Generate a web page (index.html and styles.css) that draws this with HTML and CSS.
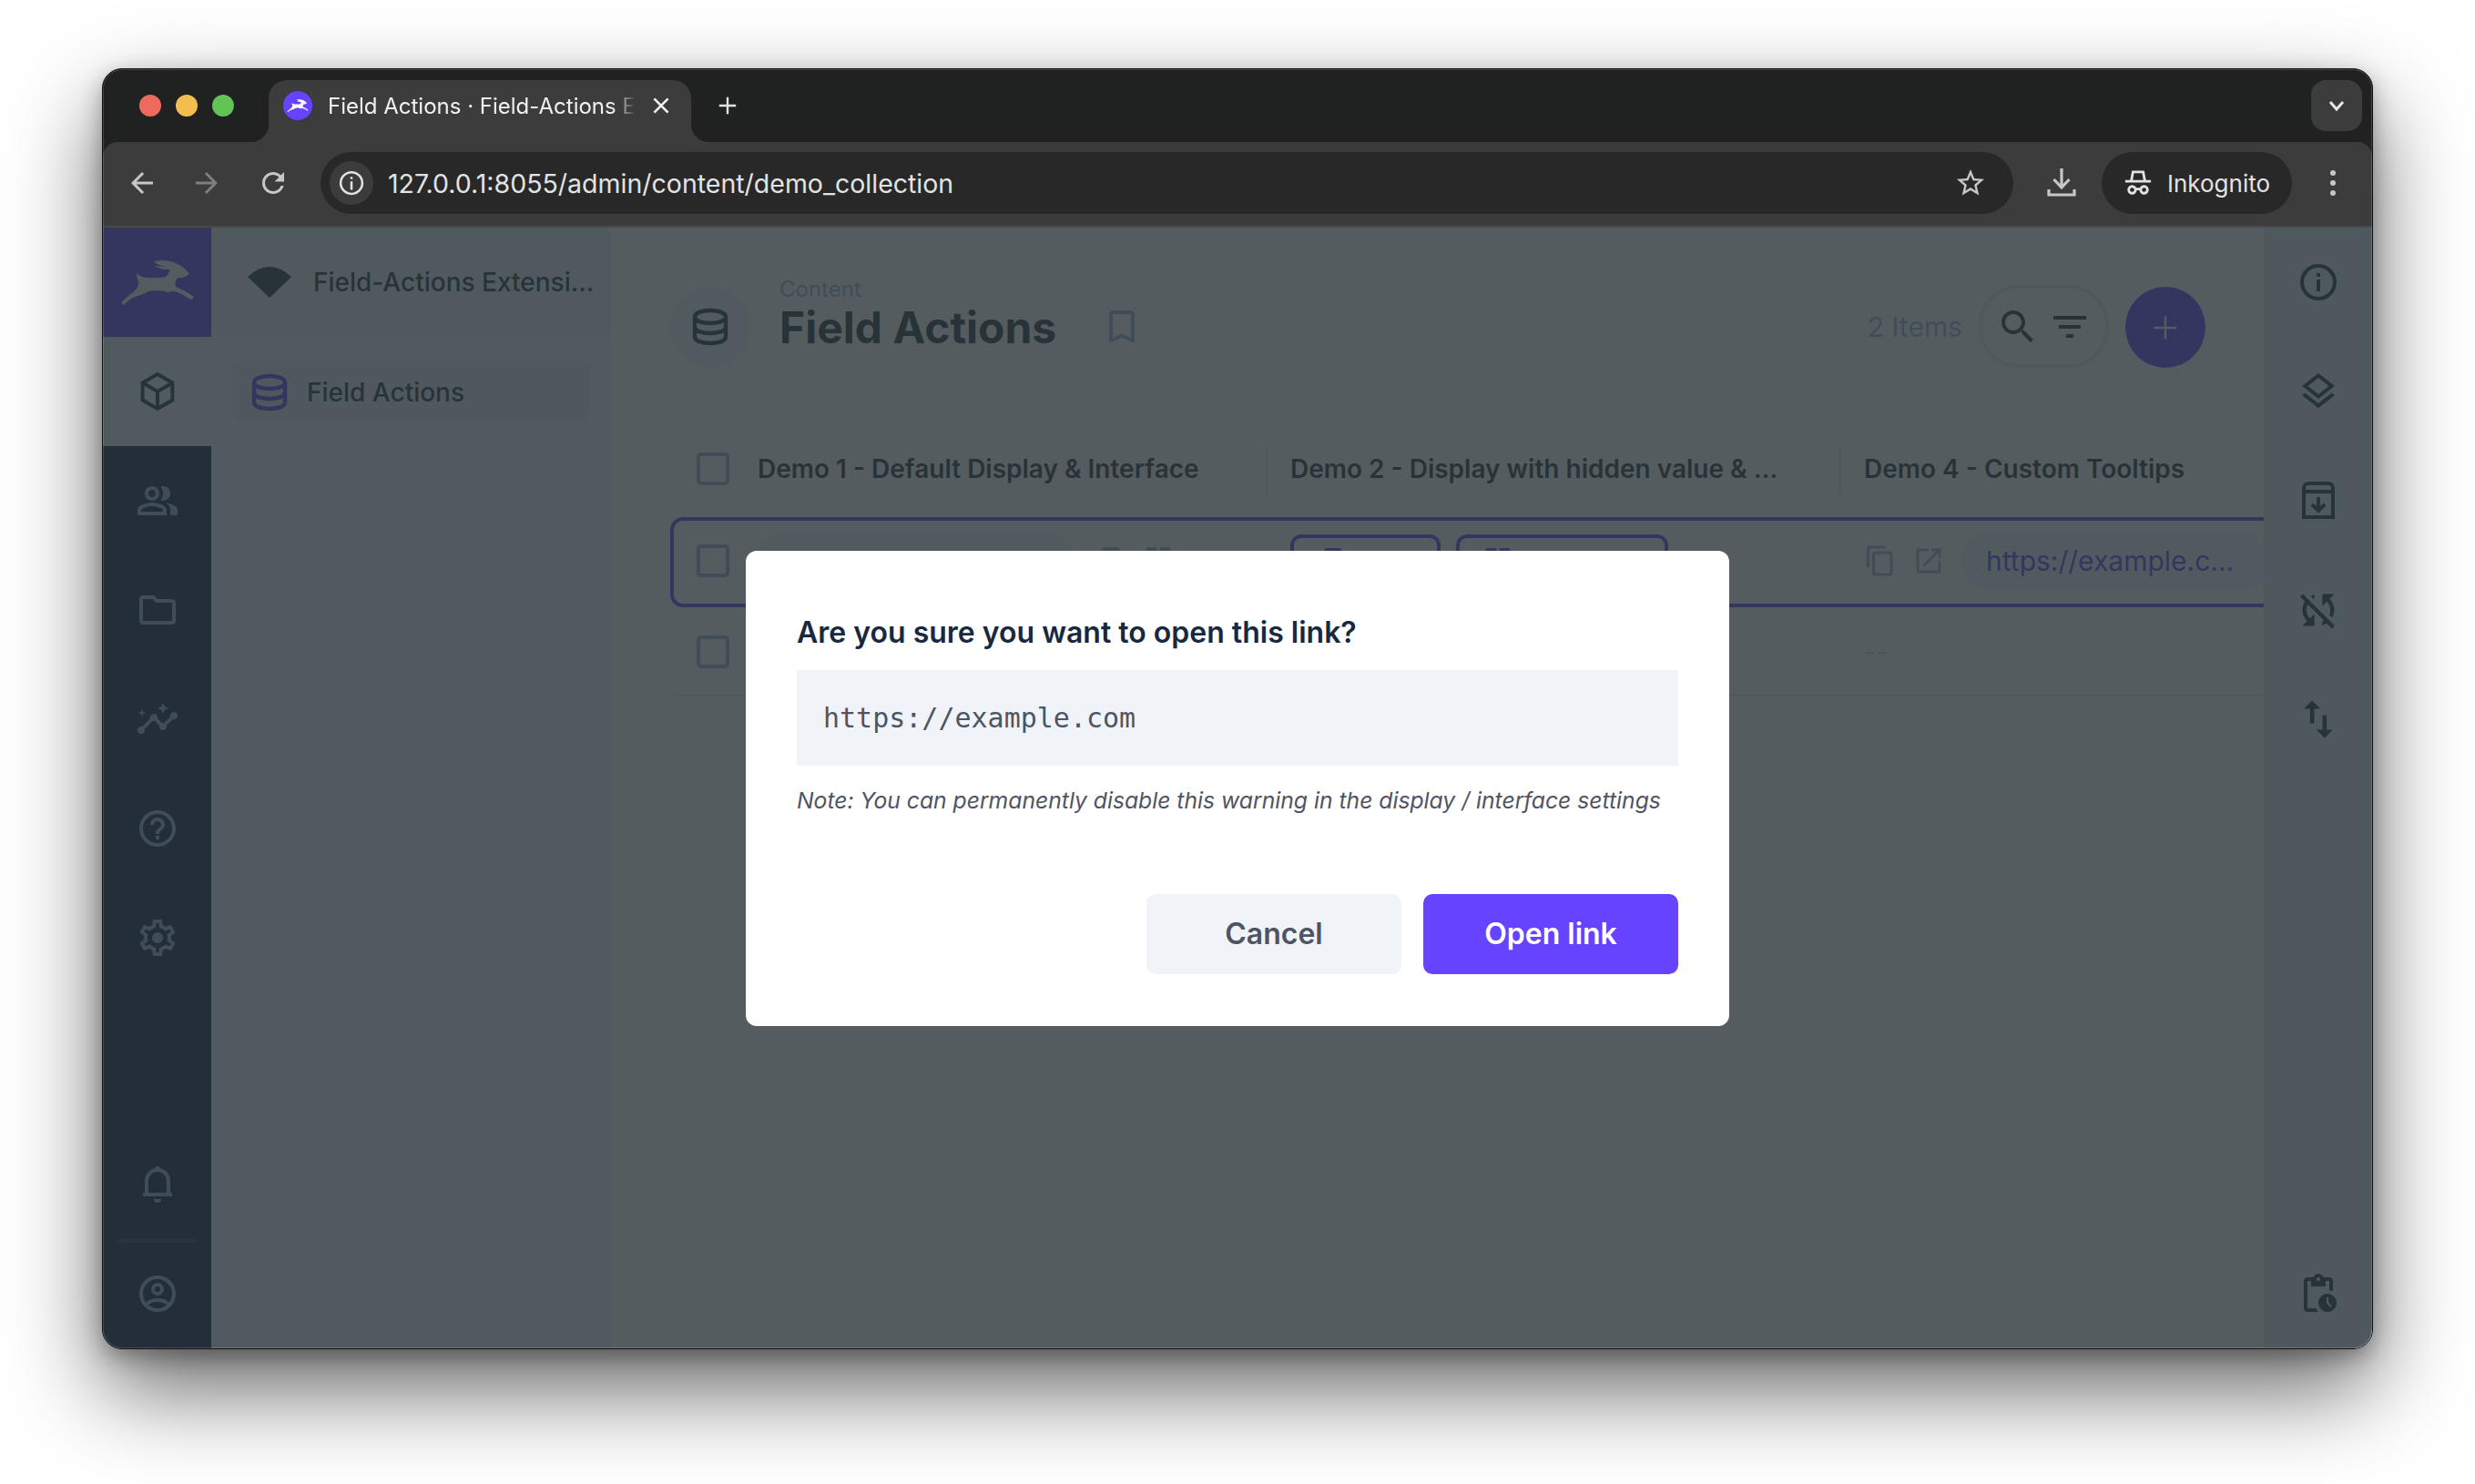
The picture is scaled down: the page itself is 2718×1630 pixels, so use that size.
FILE: index.html
```html
<!DOCTYPE html>
<html>
<head>
    <meta charset="utf-8">
    <title>Field Actions</title>
    <link rel="stylesheet" href="styles.css">
</head>
<body>
    <svg class="defs" width="0" height="0">
        <symbol id="rabbit" viewBox="60 160 250 160">
            <path d="M68 306C80 292 92 282 106 272C116 264 122 254 124 240C118 230 116 220 119 210C126 220 136 224 150 225C170 226 192 226 208 224C216 220 222 210 226 198C208 200 190 196 172 186C184 186 200 190 214 190C196 186 180 180 174 172C196 166 226 168 246 178C264 186 280 198 288 212C282 222 268 226 250 226C244 236 240 246 246 256C262 262 282 272 302 286C304 292 298 298 292 296C276 284 256 272 232 268C224 274 216 274 210 270C190 266 172 266 156 270C136 282 120 284 106 290C94 296 84 306 76 312C70 312 66 310 68 306Z"/>
        </symbol>
        <symbol id="database" viewBox="0 0 24 24">
            <path fill="none" stroke="currentColor" stroke-width="2.2" d="M3.500 6.500C3.500 4.300 7.300 3 12 3s8.500 1.300 8.500 3.500v11c0 2.200-3.800 3.500-8.500 3.500s-8.500-1.300-8.500-3.500zM3.500 6.500c0 2.200 3.800 3.500 8.500 3.500s8.500-1.300 8.500-3.500M3.500 12c0 2.200 3.800 3.500 8.500 3.500s8.500-1.300 8.500-3.500"/>
        </symbol>
        <symbol id="copy" viewBox="0 0 24 24">
            <path d="M16 1H4c-1.100 0-2 .9-2 2v14h2V3h12V1zm3 4H8c-1.100 0-2 .9-2 2v14c0 1.100.9 2 2 2h11c1.100 0 2-.9 2-2V7c0-1.100-.9-2-2-2zm0 16H8V7h11v14z"/>
        </symbol>
        <symbol id="open" viewBox="0 0 24 24">
            <path d="M19 19H5V5h7V3H5c-1.110 0-2 .9-2 2v14c0 1.100.89 2 2 2h14c1.100 0 2-.9 2-2v-7h-2v7zM14 3v2h3.590l-9.830 9.830 1.410 1.410L19 6.410V10h2V3h-7z"/>
        </symbol>
        <symbol id="block" viewBox="0 0 24 24">
            <rect x="6" y="2" width="13" height="20" rx="2.500"/>
        </symbol>
        <symbol id="blocks" viewBox="0 0 24 24">
            <rect x="3" y="2" width="8" height="20" rx="1.500"/>
            <rect x="13" y="2" width="8" height="20" rx="1.500"/>
        </symbol>
    </svg>

    <div class="window">
        <div class="titlebar">
            <div class="lights">
                <span class="light red"></span>
                <span class="light yellow"></span>
                <span class="light green"></span>
            </div>
            <div class="tab">
                <span class="favicon"><svg class="favicon-rabbit"><use href="#rabbit"/></svg></span>
                <span class="tab-title">Field Actions · Field-Actions E</span>
                <svg class="tab-close" viewBox="0 0 24 24"><path d="M5 5l14 14M19 5L5 19"/></svg>
            </div>
            <svg class="new-tab" viewBox="0 0 24 24"><path d="M12 2v20M2 12h20"/></svg>
            <div class="tab-list">
                <svg class="tab-list-icon" viewBox="0 0 24 24"><path d="M5 8l7 8 7-8"/></svg>
            </div>
        </div>

        <div class="toolbar">
            <svg class="tool" viewBox="0 0 24 24"><path d="M20 11H7.830l5.590-5.590L12 4l-8 8 8 8 1.410-1.410L7.830 13H20v-2z"/></svg>
            <svg class="tool tool-off" viewBox="0 0 24 24"><path d="M12 4l-1.410 1.410L16.170 11H4v2h12.170l-5.580 5.590L12 20l8-8z"/></svg>
            <svg class="tool" viewBox="0 0 24 24"><path d="M17.650 6.350C16.200 4.900 14.210 4 12 4c-4.420 0-7.990 3.580-7.990 8s3.570 8 7.990 8c3.730 0 6.840-2.550 7.730-6h-2.080c-.82 2.330-3.040 4-5.650 4-3.310 0-6-2.690-6-6s2.690-6 6-6c1.660 0 3.140.69 4.220 1.780L13 11h7V4l-2.350 2.350z"/></svg>
            <div class="address">
                <span class="site-info">
                    <svg class="site-info-icon" viewBox="0 0 24 24">
                        <circle cx="12" cy="12" r="9.500" fill="none" stroke="currentColor" stroke-width="2"/>
                        <path d="M11 10.500h2V18h-2zM11 6.500h2v2h-2z"/>
                    </svg>
                </span>
                <span class="url">127.0.0.1:8055/admin/content/demo_collection</span>
                <svg class="tool star" viewBox="0 0 24 24"><path d="M22 9.240l-7.190-.62L12 2 9.190 8.630 2 9.240l5.460 4.730L5.820 21 12 17.270 18.180 21l-1.630-7.030L22 9.240zM12 15.400l-3.760 2.270 1-4.280-3.320-2.880 4.380-.38L12 6.100l1.710 4.040 4.380.38-3.320 2.880 1 4.280L12 15.400z"/></svg>
            </div>
            <svg class="download" viewBox="0 0 32 32"><path d="M16 0v20M7.500 12l8.500 9 8.500-9M2 23v6h28v-6"/></svg>
            <div class="incognito">
                <svg class="incognito-icon" viewBox="0 0 32 32">
                    <path d="M8 14l2-11h12l2 11M1 14h30"/>
                    <circle cx="9" cy="24" r="4"/>
                    <circle cx="23" cy="24" r="4"/>
                    <path d="M13 23h6"/>
                </svg>
                <span>Inkognito</span>
            </div>
            <svg class="tool dots" viewBox="0 0 36 36">
                <circle cx="18" cy="7" r="3"/>
                <circle cx="18" cy="18" r="3"/>
                <circle cx="18" cy="29" r="3"/>
            </svg>
        </div>

        <div class="app">
            <nav class="nav">
                <div class="logo"><svg class="logo-rabbit"><use href="#rabbit"/></svg></div>
                <div class="nav-item active">
                    <svg class="icon" viewBox="0 0 24 24"><path class="line" d="M12 2.500l8.200 4.750v9.500L12 21.500l-8.200-4.750v-9.500zM3.800 7.250L12 12l8.200-4.750M12 12v9.500"/></svg>
                </div>
                <div class="nav-item">
                    <svg class="icon" viewBox="0 0 24 24"><path d="M16.670 13.130C18.040 14.060 19 15.320 19 17v3h4v-3c0-2.180-3.570-3.470-6.330-3.870zM15 12c2.210 0 4-1.790 4-4s-1.790-4-4-4c-.47 0-.91.1-1.330.24C14.500 5.270 15 6.580 15 8s-.5 2.730-1.330 3.760c.42.14.86.24 1.330.24zM9 12c2.210 0 4-1.790 4-4s-1.790-4-4-4-4 1.790-4 4 1.790 4 4 4zm0-6c1.100 0 2 .9 2 2s-.9 2-2 2-2-.9-2-2 .9-2 2-2zM9 13c-2.670 0-8 1.340-8 4v3h16v-3c0-2.660-5.330-4-8-4zm6 5H3v-.99C3.200 16.290 6.300 15 9 15s5.800 1.290 6 2v1z"/></svg>
                </div>
                <div class="nav-item">
                    <svg class="icon" viewBox="0 0 24 24"><path d="M9.170 6l2 2H20v10H4V6h5.170M10 4H4c-1.100 0-1.990.9-1.990 2L2 18c0 1.100.9 2 2 2h16c1.100 0 2-.9 2-2V8c0-1.100-.9-2-2-2h-8l-2-2z"/></svg>
                </div>
                <div class="nav-item">
                    <svg class="icon" viewBox="0 0 24 24"><path d="M21 8c-1.450 0-2.260 1.440-1.930 2.510l-3.550 3.560c-.3-.09-.74-.09-1.040 0l-2.550-2.550C12.270 10.450 11.460 9 10 9c-1.450 0-2.270 1.440-1.930 2.520l-4.560 4.550C2.440 15.740 1 16.550 1 18c0 1.100.9 2 2 2 1.450 0 2.260-1.440 1.930-2.510l4.550-4.560c.3.09.74.09 1.040 0l2.550 2.550C12.730 16.550 13.540 18 15 18c1.450 0 2.270-1.440 1.930-2.520l3.560-3.550c1.070.33 2.510-.48 2.510-1.930 0-1.100-.9-2-2-2zM15 9l.94-2.070L18 6l-2.060-.93L15 3l-.92 2.070L12 6l2.080.93zM3.500 11L4 9l2-.5L4 8l-.5-2L3 8l-2 .5L3 9z"/></svg>
                </div>
                <div class="nav-item">
                    <svg class="icon" viewBox="0 0 24 24"><path d="M11 18h2v-2h-2v2zm1-16C6.480 2 2 6.480 2 12s4.480 10 10 10 10-4.480 10-10S17.520 2 12 2zm0 18c-4.410 0-8-3.590-8-8s3.590-8 8-8 8 3.590 8 8-3.590 8-8 8zm0-14c-2.210 0-4 1.790-4 4h2c0-1.100.9-2 2-2s2 .9 2 2c0 2-3 1.750-3 5h2c0-2.250 3-2.500 3-5 0-2.210-1.790-4-4-4z"/></svg>
                </div>
                <div class="nav-item">
                    <svg class="icon" viewBox="0 0 24 24"><path d="M19.430 12.980c.04-.32.07-.64.07-.98 0-.34-.03-.66-.07-.98l2.110-1.650c.19-.15.24-.42.12-.64l-2-3.460c-.09-.16-.26-.25-.44-.25-.06 0-.12.01-.17.03l-2.490 1c-.52-.4-1.080-.73-1.690-.98l-.38-2.650C14.460 2.180 14.250 2 14 2h-4c-.25 0-.46.18-.49.42l-.38 2.650c-.61.25-1.170.59-1.690.98l-2.490-1c-.06-.02-.12-.03-.18-.03-.17 0-.34.09-.43.25l-2 3.460c-.13.22-.07.49.12.64l2.110 1.650c-.04.32-.07.65-.07.98 0 .33.03.66.07.98l-2.110 1.650c-.19.15-.24.42-.12.64l2 3.460c.09.16.26.25.44.25.06 0 .12-.01.17-.03l2.490-1c.52.4 1.080.73 1.690.98l.38 2.650c.03.24.24.42.49.42h4c.25 0 .46-.18.49-.42l.38-2.650c.61-.25 1.170-.59 1.690-.98l2.490 1c.06.02.12.03.18.03.17 0 .34-.09.43-.25l2-3.460c.12-.22.07-.49-.12-.64l-2.110-1.650zm-1.980-1.710c.04.31.05.52.05.73 0 .21-.02.43-.05.73l-.14 1.130.89.7 1.080.84-.7 1.210-1.270-.51-1.040-.42-.9.68c-.43.32-.84.56-1.250.73l-1.060.43-.16 1.130-.2 1.350h-1.400l-.19-1.350-.16-1.130-1.060-.43c-.43-.18-.83-.41-1.230-.71l-.91-.7-1.060.43-1.270.51-.7-1.210 1.080-.84.89-.7-.14-1.130c-.03-.31-.05-.54-.05-.74s.02-.43.05-.73l.14-1.130-.89-.7-1.080-.84.7-1.210 1.270.51 1.040.42.9-.68c.43-.32.84-.56 1.250-.73l1.060-.43.16-1.130.2-1.350h1.390l.19 1.350.16 1.130 1.060.43c.43.18.83.41 1.230.71l.91.7 1.060-.43 1.270-.51.7 1.210-1.070.85-.89.7.14 1.130z"/><circle cx="12" cy="12" r="3"/></svg>
                </div>
                <div class="nav-item nav-bell">
                    <svg class="icon" viewBox="0 0 24 24"><path class="line" d="M6 17.500V10a6 6 0 0 1 12 0v7.500M4 17.500h16"/><circle cx="12" cy="3.500" r="1.500"/><path d="M10 20h4a2 2 0 0 1-4 0z"/></svg>
                </div>
                <div class="nav-item nav-user">
                    <svg class="icon" viewBox="0 0 24 24"><circle class="line" cx="12" cy="12" r="9"/><circle class="line" cx="12" cy="9.500" r="2.500"/><path class="line" d="M5.500 18.500C8 14.500 16 14.500 18.500 18.500"/></svg>
                </div>
            </nav>

            <aside class="side">
                <div class="project">
                    <svg class="project-icon" viewBox="0 0 48 34"><path d="M0 11Q24-11 48 11L24 34Z"/></svg>
                    <span class="project-name">Field-Actions Extensi...</span>
                </div>
                <div class="collection">
                    <svg class="collection-icon"><use href="#database"/></svg>
                    <span>Field Actions</span>
                </div>
            </aside>

            <main class="main">
                <header class="header">
                    <div class="header-icon"><svg class="header-db"><use href="#database"/></svg></div>
                    <div class="header-titles">
                        <div class="crumb">Content</div>
                        <h1 class="title">Field Actions</h1>
                    </div>
                    <svg class="icon bookmark" viewBox="0 0 24 24"><path d="M17 3H7c-1.100 0-1.990.9-1.990 2L5 21l7-3 7 3V5c0-1.100-.9-2-2-2zm0 15l-5-2.180L7 18V5h10v13z"/></svg>
                    <span class="count">2 Items</span>
                    <div class="search">
                        <svg class="icon" viewBox="0 0 24 24"><path d="M15.500 14h-.79l-.28-.27C15.410 12.590 16 11.110 16 9.500 16 5.910 13.090 3 9.500 3S3 5.910 3 9.500 5.910 16 9.500 16c1.610 0 3.090-.59 4.230-1.570l.27.28v.79l5 4.990L20.490 19l-4.990-5zm-6 0C7.010 14 5 11.990 5 9.500S7.010 5 9.500 5 14 7.010 14 9.500 11.990 14 9.500 14z"/></svg>
                        <svg class="icon" viewBox="0 0 24 24"><path d="M10 18h4v-2h-4v2zM3 6v2h18V6H3zm3 7h12v-2H6v2z"/></svg>
                    </div>
                    <div class="add"><svg class="add-icon" viewBox="0 0 24 24"><path d="M12 2v20M2 12h20"/></svg></div>
                </header>

                <div class="table">
                    <div class="row row-head">
                        <span class="check"></span>
                        <span class="th">Demo 1 - Default Display &amp; Interface</span>
                        <span class="th th-sep">Demo 2 - Display with hidden value &amp; ...</span>
                        <span class="th th-sep">Demo 4 - Custom Tooltips</span>
                    </div>
                    <div class="row row-active">
                        <span class="check"></span>
                        <div class="cell">
                            <span class="value value-first"></span>
                            <svg class="action"><use href="#block"/></svg>
                            <svg class="action"><use href="#blocks"/></svg>
                        </div>
                        <div class="cell">
                            <span class="outline outline-a"><svg class="action action-purple"><use href="#block"/></svg></span>
                            <span class="outline outline-b"><svg class="action action-purple"><use href="#blocks"/></svg></span>
                        </div>
                        <div class="cell">
                            <svg class="action"><use href="#copy"/></svg>
                            <svg class="action"><use href="#open"/></svg>
                            <span class="value link">https://example.c...</span>
                        </div>
                    </div>
                    <div class="row row-last">
                        <span class="check"></span>
                        <span></span>
                        <span></span>
                        <span class="empty">--</span>
                    </div>
                </div>
            </main>

            <aside class="rail">
                <div class="rail-item">
                    <svg class="icon rail-icon" viewBox="0 0 24 24"><circle class="line" cx="12" cy="12" r="9"/><path d="M11 10.500h2V17h-2zM11 7h2v2h-2z"/></svg>
                </div>
                <div class="rail-item">
                    <svg class="icon rail-icon" viewBox="0 0 24 24"><path d="M11.990 18.540l-7.370-5.730L3 14.070l9 7 9-7-1.630-1.270-7.380 5.740zM12 16l7.360-5.730L21 9l-9-7-9 7 1.630 1.270L12 16zm0-11.470L17.740 9 12 13.470 6.260 9 12 4.530z"/></svg>
                </div>
                <div class="rail-item">
                    <svg class="icon rail-icon" viewBox="0 0 24 24"><path class="line" d="M4 7V5a2.500 2.500 0 0 1 2.500-2.500h11A2.500 2.500 0 0 1 20 5v16H4V7h16M12 10v7.500M8.500 14l3.500 3.500 3.500-3.500"/></svg>
                </div>
                <div class="rail-item">
                    <svg class="icon rail-icon" viewBox="1 1 22 22"><path d="M10 6.350V4.260c-.66.17-1.290.43-1.880.75l1.500 1.500c.13-.06.25-.11.38-.16zM20 12c0-2.210-.91-4.200-2.360-5.640L20 4h-6v6l2.240-2.240C17.320 8.850 18 10.340 18 12c0 .85-.19 1.650-.51 2.380l1.500 1.500C19.630 14.740 20 13.410 20 12zM4.270 4L2.860 5.410l2.360 2.360C4.450 8.990 4 10.440 4 12c0 2.210.91 4.200 2.360 5.640L4 20h6v-6l-2.240 2.240C6.680 15.150 6 13.660 6 12c0-1 .25-1.940.68-2.770l8.080 8.080c-.25.13-.5.24-.76.34v2.090c.8-.21 1.550-.54 2.230-.96l2.580 2.580 1.410-1.410L4.270 4z"/></svg>
                </div>
                <div class="rail-item">
                    <svg class="icon rail-icon" viewBox="1.500 1.500 21 21"><path d="M16 17.010V10h-2v7.010h-3L15 21l4-3.990h-3zM9 3L5 6.990h3V14h2V6.990h3L9 3z"/></svg>
                </div>
                <div class="rail-item rail-bottom">
                    <svg class="icon rail-icon" viewBox="0 0 24 24"><path d="M17 12c-2.760 0-5 2.240-5 5s2.240 5 5 5 5-2.240 5-5-2.240-5-5-5zm1.650 7.350L16.500 17.200V14h1v2.790l1.850 1.850-.7.710zM18 3h-3.180C14.400 1.840 13.300 1 12 1s-2.400.84-2.820 2H6c-1.100 0-2 .9-2 2v15c0 1.100.9 2 2 2h6.110c-.59-.57-1.070-1.250-1.420-2H6V5h2v3h8V5h2v5.080c.71.1 1.380.31 2 .6V5c0-1.100-.9-2-2-2zm-6 2c-.55 0-1-.45-1-1s.45-1 1-1 1 .45 1 1-.45 1-1 1z"/></svg>
                </div>
            </aside>

            <div class="overlay">
                <div class="dialog">
                    <h2 class="dialog-title">Are you sure you want to open this link?</h2>
                    <div class="dialog-code">https://example.com</div>
                    <p class="dialog-note">Note: You can permanently disable this warning in the display / interface settings</p>
                    <div class="dialog-actions">
                        <button class="btn btn-cancel">Cancel</button>
                        <button class="btn btn-open">Open link</button>
                    </div>
                </div>
            </div>
        </div>
    </div>
</body>
</html>
```

FILE: styles.css
```css
* {
    box-sizing: border-box;
}

html, body {
    margin: 0;
    height: 100%;
    background: #fff;
}

body {
    padding: 75px 112px 0 112px;
    font-family: "Inter", "Liberation Sans", sans-serif;
    overflow: hidden;
}

.defs {
    position: absolute;
}

/* browser frame */
.window {
    position: relative;
    width: 2494px;
    height: 1407px;
    display: flex;
    flex-direction: column;
    background: #202221;
    border: 1px solid #111;
    border-radius: 22px;
    overflow: hidden;
    box-shadow: 0 44px 100px rgba(0, 0, 0, .6), 0 8px 24px rgba(0, 0, 0, .3);
}

.window::after {
    content: "";
    position: absolute;
    inset: 0;
    border-radius: 21px;
    box-shadow: inset 0 0 0 1px rgba(255, 255, 255, .16);
    pointer-events: none;
}

.titlebar {
    display: flex;
    align-items: flex-start;
    height: 80px;
    padding: 12px 11px 0 40px;
    flex: none;
}

.lights {
    display: flex;
    align-items: center;
    gap: 16px;
    height: 56px;
    margin-right: 38px;
}

.light {
    width: 24px;
    height: 24px;
    border-radius: 50%;
}

.red { background: #ee6a5f; }
.yellow { background: #f5bd4f; }
.green { background: #61c454; }

.tab {
    position: relative;
    display: flex;
    align-items: center;
    width: 464px;
    height: 68px;
    padding: 0 20px 12px 16px;
    background: #3c3c3c;
    border-radius: 20px 20px 0 0;
    color: #f1f1f1;
}

.tab::before, .tab::after {
    content: "";
    position: absolute;
    bottom: 0;
    width: 20px;
    height: 20px;
}

.tab::before {
    left: -20px;
    background: radial-gradient(circle at 0 0, transparent 20px, #3c3c3c 20.500px);
}

.tab::after {
    right: -20px;
    background: radial-gradient(circle at 100% 0, transparent 20px, #3c3c3c 20.500px);
}

.favicon {
    display: flex;
    align-items: center;
    justify-content: center;
    flex: none;
    width: 32px;
    height: 32px;
    border-radius: 50%;
    background: #6644ff;
}

.favicon-rabbit {
    width: 24px;
    height: 16px;
    fill: #fff;
}

.tab-title {
    flex: 1;
    min-width: 0;
    margin-left: 17px;
    font-size: 24px;
    white-space: nowrap;
    -webkit-mask-image: linear-gradient(to right, #000 312px, transparent 338px);
    mask-image: linear-gradient(to right, #000 312px, transparent 338px);
}

.tab-close {
    flex: none;
    width: 26px;
    height: 26px;
    fill: none;
    stroke: #f1f1f1;
    stroke-width: 2.400;
}

.new-tab {
    flex: none;
    width: 22px;
    height: 22px;
    margin: 17px 0 0 29px;
    fill: none;
    stroke: #e3e3e3;
    stroke-width: 2.600;
}

.tab-list {
    display: flex;
    align-items: center;
    justify-content: center;
    width: 56px;
    height: 56px;
    margin-left: auto;
    border-radius: 16px;
    background: #3c3c3c;
}

.tab-list-icon {
    width: 24px;
    height: 24px;
    fill: none;
    stroke: #e8e8e8;
    stroke-width: 3;
}

.toolbar {
    display: flex;
    align-items: center;
    flex: none;
    height: 94px;
    padding: 0 25px 2px 25px;
    background: #3c3c3c;
    border-bottom: 2px solid #474a4b;
    border-radius: 16px 16px 0 0;
    color: #c7c7c7;
}

.tool {
    flex: none;
    width: 36px;
    height: 36px;
    margin-right: 35px;
    fill: #c7c7c7;
}

.tool-off {
    margin-right: 37px;
    fill: #7e7e7e;
}

.address {
    display: flex;
    align-items: center;
    width: 1859px;
    height: 68px;
    margin-left: -1px;
    padding: 0 11px 0 10px;
    border-radius: 34px;
    background: #282828;
}

.site-info {
    display: flex;
    align-items: center;
    justify-content: center;
    flex: none;
    width: 48px;
    height: 48px;
    border-radius: 50%;
    background: #3c3c3c;
}

.site-info-icon {
    width: 30px;
    height: 30px;
    fill: #e3e3e3;
    color: #e3e3e3;
}

.url {
    margin-left: 16px;
    font-size: 28.500px;
    color: #e3e3e3;
}

.star {
    margin: 0 18px 0 auto;
}

.download {
    flex: none;
    width: 32px;
    height: 32px;
    margin: 0 28px 0 37px;
    fill: none;
    stroke: #c7c7c7;
    stroke-width: 3.200;
}

.incognito {
    display: flex;
    align-items: center;
    flex: none;
    width: 209px;
    height: 68px;
    padding-left: 25px;
    border-radius: 34px;
    background: #282828;
    color: #e3e3e3;
    font-size: 26px;
}

.incognito-icon {
    width: 30px;
    height: 32px;
    margin-right: 17px;
    fill: none;
    stroke: #e3e3e3;
    stroke-width: 3;
}

.dots {
    width: 36px;
    margin: 0 0 0 27px;
}

/* app under the dialog */
.app {
    position: relative;
    flex: 1;
    display: flex;
    min-height: 0;
    background: #fff;
    color: #263238;
}

.icon {
    flex: none;
    width: 48px;
    height: 48px;
    fill: currentColor;
}

.icon .line {
    fill: none;
    stroke: currentColor;
    stroke-width: 2;
}

.nav {
    display: flex;
    flex-direction: column;
    flex: none;
    width: 119px;
    background: #0b1937;
    color: #a2b5cd;
}

.logo {
    display: flex;
    align-items: center;
    justify-content: center;
    height: 120px;
    background: #6644ff;
}

.logo-rabbit {
    width: 84px;
    height: 54px;
    fill: #fff;
}

.nav-item {
    display: flex;
    align-items: center;
    justify-content: center;
    height: 120px;
}

.nav-item.active {
    background: #f0f4f9;
    color: #263238;
}

.nav-bell {
    margin-top: auto;
}

.nav-user {
    border-top: 4px solid #2a3b4d;
    margin: 0 16px;
    padding-bottom: 4px;
}

.side {
    flex: none;
    width: 439px;
    background: #f0f4f9;
}

.project {
    display: flex;
    align-items: center;
    height: 120px;
    padding-left: 40px;
    background: #e9eef5;
}

.project-icon {
    flex: none;
    width: 48px;
    height: 34px;
    fill: #263238;
}

.project-name {
    margin-left: 24px;
    font-size: 28px;
    font-weight: 500;
    white-space: nowrap;
}

.collection {
    display: flex;
    align-items: center;
    height: 69px;
    margin: 26px 23px 0 24px;
    padding-left: 16px;
    border-radius: 12px;
    background: #e4eaf1;
    font-size: 28px;
    font-weight: 500;
}

.collection-icon {
    flex: none;
    width: 48px;
    height: 48px;
    margin-right: 17px;
    color: #6644ff;
}

.main {
    flex: 1;
    min-width: 0;
    overflow: hidden;
}

.header {
    display: flex;
    align-items: flex-start;
    height: 232px;
    padding: 65px 64px 0 65px;
}

.header-icon {
    display: flex;
    align-items: center;
    justify-content: center;
    flex: none;
    width: 88px;
    height: 88px;
    border-radius: 50%;
    background: #f0f4f9;
}

.header-db {
    width: 48px;
    height: 48px;
}

.header-titles {
    margin-left: 32px;
}

.crumb {
    height: 24px;
    margin-top: -9px;
    font-size: 24px;
    line-height: 24px;
    color: #a2b5cd;
}

.title {
    margin: 0;
    font-size: 48px;
    font-weight: 700;
    line-height: 60px;
    white-space: nowrap;
}

.bookmark {
    margin: 20px 0 0 48px;
    color: #a2b5cd;
}

.count {
    margin: 22px 18px 0 auto;
    font-size: 30px;
    line-height: 44px;
    color: #a2b5cd;
}

.search {
    display: flex;
    align-items: center;
    justify-content: center;
    gap: 9px;
    width: 143px;
    height: 91px;
    margin-top: -2px;
    border: 4px solid #e4eaf1;
    border-radius: 44px;
}

.add {
    display: flex;
    align-items: center;
    justify-content: center;
    width: 88px;
    height: 89px;
    margin-left: 18px;
    border-radius: 50%;
    background: #6644ff;
}

.add-icon {
    width: 30px;
    height: 30px;
    fill: none;
    stroke: #fff;
    stroke-width: 1.900;
}

.table {
    width: 1769px;
    margin-left: 65px;
}

.row {
    display: grid;
    grid-template-columns: 67px 585px 630px 1fr;
    align-items: center;
    border: 4px solid transparent;
    padding-left: 25px;
}

.row-head {
    height: 66px;
    margin-bottom: 20px;
}

.row-active {
    height: 99px;
    padding-bottom: 3px;
    border-color: #6644ff;
    border-radius: 14px;
}

.row-last {
    height: 98px;
    padding-bottom: 2px;
    border-bottom: 2px solid #e4eaf1;
}

.check {
    width: 36px;
    height: 36px;
    border: 4px solid #a2b5cd;
    border-radius: 5px;
}

.th {
    display: flex;
    align-items: center;
    height: 58px;
    font-size: 28px;
    font-weight: 600;
    white-space: nowrap;
}

.th-sep {
    margin-left: -27px;
    padding-left: 25px;
    border-left: 2px solid #e4eaf1;
}

.cell {
    display: flex;
    align-items: center;
    gap: 17px;
    white-space: nowrap;
}

.value {
    flex: none;
    height: 66px;
    border-radius: 33px;
    background: #f0f4f9;
}

.value-first {
    width: 349px;
    margin-right: 3px;
}

.link {
    display: flex;
    align-items: center;
    padding: 0 28px;
    width: 340px;
    font-size: 30px;
    color: #6644ff;
}

.action {
    flex: none;
    width: 36px;
    height: 36px;
    fill: #a2b5cd;
}

.action-purple {
    fill: #6644ff;
}

.outline {
    display: flex;
    height: 58px;
    padding: 8px 0 0 24px;
    border: 4px solid #6644ff;
    border-radius: 12px;
}

.outline-a {
    width: 165px;
}

.outline-b {
    width: 233px;
}

.empty {
    font-size: 28px;
    color: #cfd8e3;
}

.rail {
    display: flex;
    flex-direction: column;
    flex: none;
    width: 119px;
    background: #e4eaf1;
}

.rail-item {
    display: flex;
    align-items: center;
    justify-content: center;
    height: 120px;
}

.rail-bottom {
    margin-top: auto;
}

/* dialog */
.overlay {
    position: absolute;
    inset: 0;
    display: flex;
    align-items: center;
    justify-content: center;
    background: rgba(41, 51, 56, .8);
}

.dialog {
    width: 1080px;
    height: 522px;
    padding: 70px 56px 56px;
    border-radius: 12px;
    background: #fff;
}

.dialog-title {
    margin: 0;
    font-size: 32px;
    font-weight: 600;
    line-height: 40px;
    color: #172940;
}

.dialog-code {
    display: flex;
    align-items: center;
    height: 105px;
    margin-top: 21px;
    padding: 0 28px 0 29px;
    background: #f0f4f9;
    font-family: "DejaVu Sans Mono", "Liberation Mono", monospace;
    font-size: 30px;
    color: #4f5464;
}

.dialog-note {
    margin: 22px 0 0;
    font-size: 24.700px;
    font-style: italic;
    line-height: 32px;
    color: #4f5464;
    white-space: nowrap;
}

.dialog-actions {
    display: flex;
    justify-content: flex-end;
    gap: 24px;
    margin-top: 87px;
}

.btn {
    width: 280px;
    height: 88px;
    border: none;
    border-radius: 10px;
    font-family: inherit;
    font-size: 32px;
    font-weight: 600;
}

.btn-cancel {
    background: #f0f4f9;
    color: #4f5464;
}

.btn-open {
    background: #6644ff;
    color: #fff;
}
```
